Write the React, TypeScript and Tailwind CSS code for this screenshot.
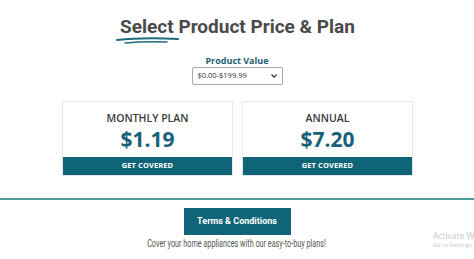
import React from "react";

function Card({ title, price }: { title: string; price: string }) {
  return (
    <div className="w-[171px] h-[75px] border border-[#e6e6e6] flex flex-col bg-white">
      <div className="flex-1 flex flex-col items-center pt-[10px]">
        <div className="text-[10.5px] leading-[13px] font-semibold text-[#3a3a3a] font-['Open_Sans',sans-serif]">{title}</div>
        <div className="text-[21px] leading-[25px] mt-[2px] font-bold text-[#17627a] font-['Open_Sans',sans-serif]">{price}</div>
      </div>
      <div className="h-[18px] bg-[#0f6478] flex items-center justify-center text-white text-[7.5px] font-bold font-['Open_Sans',sans-serif] tracking-[0.1px]">
        GET COVERED
      </div>
    </div>
  );
}

export default function App() {
  return (
    <div className="w-[474px] h-[259px] overflow-hidden bg-white relative font-['Roboto',sans-serif]">
      <div className="flex justify-center pt-[16px] pl-[1px]">
        <div className="relative text-[19px] leading-[22px] font-bold text-[#4a4a4a] font-['Roboto',sans-serif]">
          Select Product Price &amp; Plan
          <svg className="absolute left-[-5px] top-[20px]" width="66" height="9" viewBox="0 0 66 9">
            <path d="M2 4 C 20 2, 45 2, 63 3" stroke="#1e6b7b" strokeWidth="2.2" fill="none" strokeLinecap="round" />
            <path d="M10 7 C 25 5.5, 40 5.5, 52 6" stroke="#1e6b7b" strokeWidth="1.4" fill="none" strokeLinecap="round" />
          </svg>
        </div>
      </div>
      <div className="flex flex-col items-center mt-[17px]">
        <div className="text-[9px] leading-[11px] font-bold text-[#1d5f73] font-['Open_Sans',sans-serif]">Product Value</div>
        <div className="mt-[1px] w-[91px] h-[18px] border border-[#a8a8a8] rounded-[2px] flex items-center justify-between px-[5px] bg-white">
          <span className="text-[7.5px] text-[#333] font-['Open_Sans',sans-serif]">$0.00-$199.99</span>
          <svg width="6" height="4" viewBox="0 0 6 4"><path d="M0.5 0.5 L3 3.2 L5.5 0.5" stroke="#333" strokeWidth="1.2" fill="none" /></svg>
        </div>
      </div>
      <div className="flex justify-center gap-[9px] mt-[16px] pl-[1px]">
        <Card title="MONTHLY PLAN" price="$1.19" />
        <Card title="ANNUAL" price="$7.20" />
      </div>
      <div className="mt-[22px] h-[2px] bg-[#4f9a9c]" />
      <div className="flex flex-col items-center mt-[8px]">
        <div className="w-[107px] h-[27px] bg-[#0f6478] flex items-center justify-center text-white text-[9px] font-bold font-['Roboto',sans-serif]">
          Terms &amp; Conditions
        </div>
        <div className="mt-[2px] text-[10.5px] leading-[14px] text-[#555] font-['Roboto',sans-serif] scale-x-[0.69] whitespace-nowrap">
          Cover your home appliances with our easy-to-buy plans!
        </div>
      </div>
      <div className="absolute left-[433px] top-[231px] text-[#c8c8c8] font-['Open_Sans',sans-serif] whitespace-nowrap">
        <div className="text-[8.5px] leading-[10px]">Activate Windows</div>
        <div className="text-[6px] leading-[9px]">Go to Settings to activate</div>
      </div>
    </div>
  );
}
